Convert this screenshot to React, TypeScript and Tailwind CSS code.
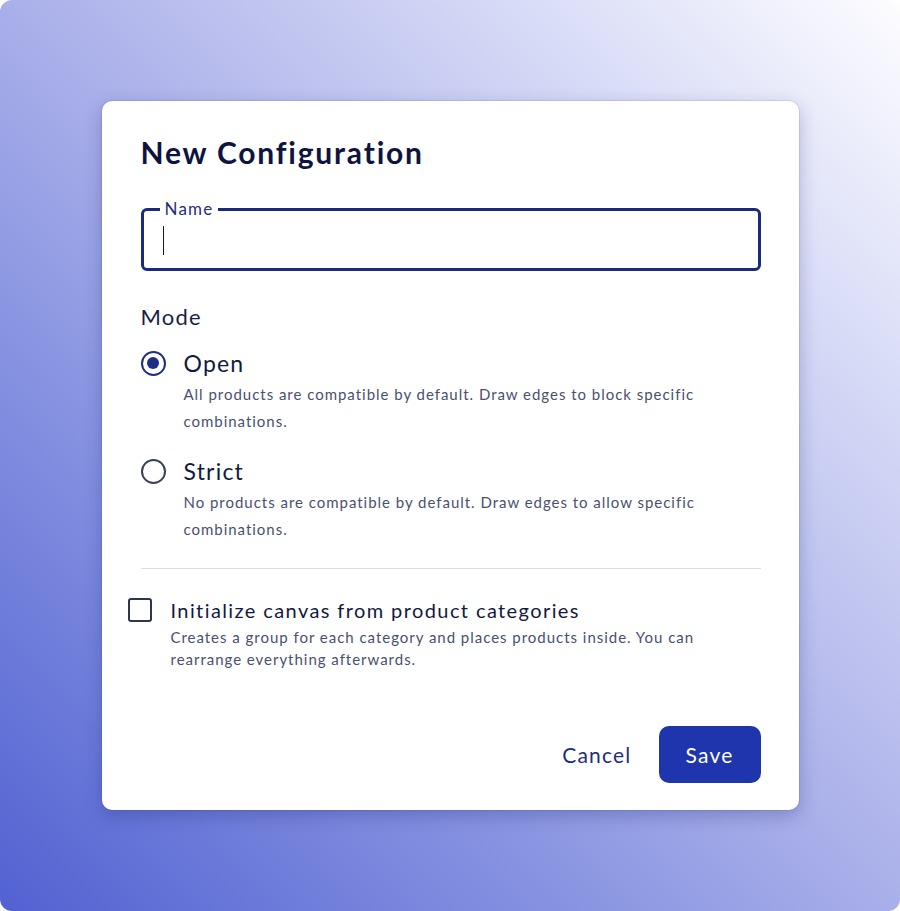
import { useState } from "react"

const font = { fontFamily: "Lato, 'Noto Sans', sans-serif" }

type Mode = "open" | "strict"

function Radio({
  checked,
  onClick,
  label,
  description,
}: {
  checked: boolean
  onClick: () => void
  label: string
  description: string
}) {
  return (
    <div>
      <button type="button" onClick={onClick} className="flex items-center gap-[18px] h-[28px]">
        <span
          className={`w-[25px] h-[25px] rounded-full border-[2.5px] flex items-center justify-center ${
            checked ? "border-[#1f2d85]" : "border-[#3a4258]"
          }`}
        >
          {checked && <span className="w-[12px] h-[12px] rounded-full bg-[#1f2d85]" />}
        </span>
        <span className="text-[23px] leading-[28px] text-[#14193f]">{label}</span>
      </button>
      <p className="mt-[4px] pl-[43px] pr-[20px] text-[15px] leading-[27px] tracking-[0.065em] text-[#4a5070]">
        {description}
      </p>
    </div>
  )
}

export default function App() {
  const [mode, setMode] = useState<Mode>("open")
  const [initCanvas, setInitCanvas] = useState(false)

  return (
    <div className="w-[900px] h-[911px] bg-white tracking-[0.075em]" style={font}>
      <div className="w-full h-full rounded-[12px] bg-linear-to-tr from-[#5261d1] via-[#a9afe9] to-[#fdfdff] flex items-center justify-center">
        <div className="w-[697px] bg-white rounded-[10px] pt-[33px] pb-[27px] pl-[39px] pr-[38px] shadow-[0_0_0_1px_rgba(30,35,80,0.08),0_6px_18px_rgba(25,35,110,0.28)]">
          <h2 className="text-[30px] leading-[36px] font-bold tracking-[0.06em] text-[#0e1440]">New Configuration</h2>

          {/* outlined text field, focused */}
          <div className="relative mt-[38px] h-[63px] rounded-[6px] border-[3px] border-[#1b2a7a]">
            <span className="absolute -top-[13px] left-[16px] px-[5px] bg-white text-[17px] leading-[22px] text-[#1f2d80]">
              Name
            </span>
            <span className="absolute left-[19px] top-[15px] w-[1.5px] h-[29px] bg-[#14193f]" />
          </div>

          <div className="mt-[32px] text-[22px] leading-[28px] text-[#1a1f45]">Mode</div>

          <div className="mt-[18px]">
            <Radio
              checked={mode === "open"}
              onClick={() => setMode("open")}
              label="Open"
              description="All products are compatible by default. Draw edges to block specific combinations."
            />
          </div>
          <div className="mt-[22px]">
            <Radio
              checked={mode === "strict"}
              onClick={() => setMode("strict")}
              label="Strict"
              description="No products are compatible by default. Draw edges to allow specific combinations."
            />
          </div>

          <div className="mt-[25px] h-px bg-[#dcdde3]" />

          <label className="mt-[28px] flex items-start gap-[19px] -ml-[13px] cursor-pointer">
            <button
              type="button"
              onClick={() => setInitCanvas((v) => !v)}
              className="mt-[1px] shrink-0 w-[24px] h-[24px] rounded-[3px] border-[2.5px] border-[#2e364f]"
            />
            <div>
              <div className="text-[20px] leading-[26px] tracking-[0.07em] text-[#14193f]">
                Initialize canvas from product categories
              </div>
              <p className="mt-[3px] pr-[20px] text-[15px] leading-[22px] tracking-[0.065em] text-[#4a5070]">
                Creates a group for each category and places products inside. You can rearrange everything afterwards.
              </p>
            </div>
          </label>

          <div className="mt-[56px] flex items-center justify-end gap-[27px]">
            <button type="button" className="text-[21px] text-[#1f2d80]">
              Cancel
            </button>
            <button
              type="button"
              className="w-[102px] h-[57px] rounded-[10px] bg-[#1f35ad] text-white text-[21px]"
            >
              Save
            </button>
          </div>
        </div>
      </div>
    </div>
  )
}
